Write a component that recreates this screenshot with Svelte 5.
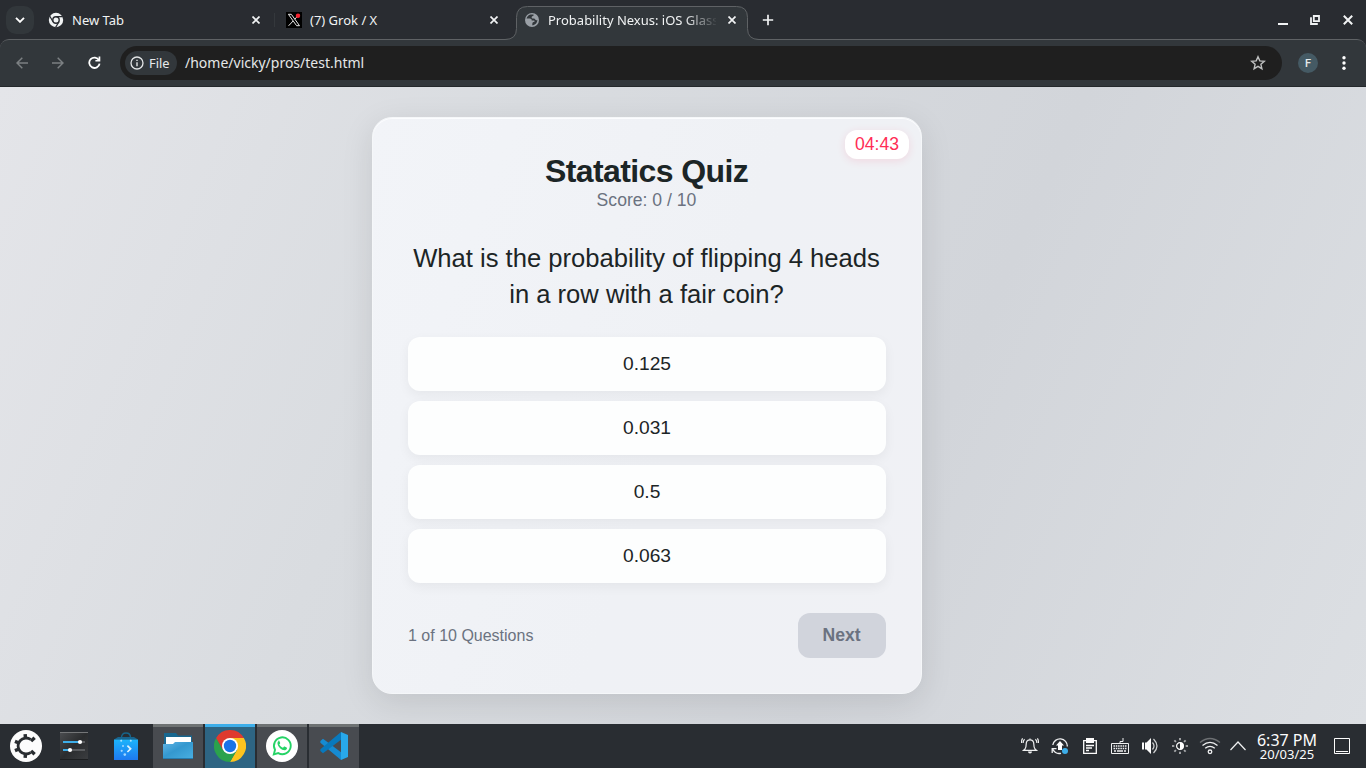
<script>
  const options = ['0.125', '0.031', '0.5', '0.063'];
</script>

{#snippet close()}
  <svg class="close" width="8" height="8" viewBox="0 0 8 8"><path d="M.5.5l7 7M7.5.5l-7 7" stroke="#f1f3f4" stroke-width="1.7" fill="none" /></svg>
{/snippet}

<div class="screen">
  <header class="tabs">
    <button class="search" aria-label="Search tabs">
      <svg width="10" height="6" viewBox="0 0 10 6"><path d="M1 .8l4 4 4-4" fill="none" stroke="#fff" stroke-width="1.9" /></svg>
    </button>
    <div class="tab first">
      <svg width="16" height="16" viewBox="0 0 16 16">
        <circle cx="8" cy="8" r="7.2" fill="#f1f3f4" />
        <circle cx="8" cy="8" r="3.2" fill="#f1f3f4" stroke="#292c31" stroke-width="1.4" />
        <path d="M8 4.6h6.7M5 9.7L1.7 4M11 9.7l-3.4 5.7" stroke="#292c31" stroke-width="1.2" />
      </svg>
      <span class="label">New Tab</span>
      {@render close()}
    </div>
    <div class="tab second">
      <svg width="16" height="16" viewBox="0 0 16 16">
        <rect width="16" height="16" fill="#000" />
        <path d="M2.4 2.3h2.9l8.2 11.4h-2.9zM13 2.5L8.8 7.2M7.1 9L2.6 13.8" fill="none" stroke="#e8e8e8" stroke-width="1" />
        <circle cx="12" cy="3.8" r="2.2" fill="#f4212e" />
      </svg>
      <span class="label">(7) Grok / X</span>
      {@render close()}
    </div>
    <div class="tab active">
      <svg class="shape" width="254" height="34" viewBox="0 0 254 34">
        <path d="M0 34v-.5Q11.5 33.5 11.5 22.5V11.5Q11.5.5 22.5.5h209q11 0 11 11v11q0 11 11.5 11v.5z" fill="#32373b" />
        <path d="M0 33.5Q11.5 33.5 11.5 22.5V11.5Q11.5.5 22.5.5h209q11 0 11 11v11q0 11 11.5 11" fill="none" stroke="#5f6265" />
      </svg>
      <svg class="globe" width="14" height="14" viewBox="0 0 14 14">
        <circle cx="7" cy="7" r="7" fill="#9aa0a6" />
        <path d="M5.5 1.5c-2 .6-3.5 2-4 4.1h3.2c1.5 0 2 .8 2 1.8h2c.7 0 1 .6.8 1.1-.3.8-1.3.7-1.8 1.1-.5.5-.2 1.5-.5 2.7 2.9-.1 5-2.3 5.2-5.3-.8.5-1.6.3-2.2-.4-.4-.6-.7-1-1.8-1-1.4 0-2-.7-1.7-1.6.3-.8.8-1.2 1.8-1.3V1.5z" fill="#32373b" />
      </svg>
      <span class="label">Probability Nexus: iOS Glass</span>
      {@render close()}
    </div>
    <svg class="plus" width="12" height="12" viewBox="0 0 12 12"><path d="M6 .8v10.4M.8 6h10.4" stroke="#f1f3f4" stroke-width="1.7" /></svg>
    <div class="controls">
      <svg width="10" height="10" viewBox="0 0 10 10"><path d="M0 9h10" stroke="#f1f3f4" stroke-width="2" /></svg>
      <svg width="10" height="10" viewBox="0 0 10 10"><path d="M3.8 1h5.2v5.2H3.8zM1 2.2V9h6.8" fill="none" stroke="#f1f3f4" stroke-width="1.8" /></svg>
      <svg width="10" height="10" viewBox="0 0 10 10"><path d="M.8.8l8.4 8.4M9.2.8L.8 9.2" stroke="#f1f3f4" stroke-width="2" /></svg>
    </div>
  </header>

  <div class="toolbar">
    <svg class="nav" width="12" height="12" viewBox="0 0 12 12"><path d="M12 6H1M6.3.7L1 6l5.3 5.3" fill="none" stroke="#7c8083" stroke-width="1.5" /></svg>
    <svg class="nav" width="12" height="12" viewBox="0 0 12 12"><path d="M0 6h11M5.7.7L11 6l-5.3 5.3" fill="none" stroke="#7c8083" stroke-width="1.5" /></svg>
    <svg class="nav" width="13" height="13" viewBox="0 0 13 13"><path d="M11 4.2A5.2 5.2 0 1 0 11.6 7.6" fill="none" stroke="#fff" stroke-width="1.8" /><path d="M12.3.6v5H7.4V4h3.2V.6z" fill="#fff" /></svg>
    <div class="address">
      <div class="chip">
        <svg width="14" height="14" viewBox="0 0 14 14"><circle cx="7" cy="7" r="6" fill="none" stroke="#e3e5e6" stroke-width="1.3" /><path d="M7 6.2v4M7 3.7v1.4" stroke="#e3e5e6" stroke-width="1.4" /></svg>
        <span>File</span>
      </div>
      <span class="url">/home/vicky/pros/test.html</span>
      <svg class="star" width="16" height="16" viewBox="0 0 16 16"><path d="M8 1.8l1.8 4.1 4.5.4-3.4 3 1 4.4L8 11.4l-3.9 2.3 1-4.4-3.4-3 4.5-.4z" fill="none" stroke="#bfc0c0" stroke-width="1.4" /></svg>
    </div>
    <div class="avatar">F</div>
    <svg class="dots" width="4" height="14" viewBox="0 0 4 14" fill="#fff"><circle cx="2" cy="1.8" r="1.7" /><circle cx="2" cy="7" r="1.7" /><circle cx="2" cy="12.2" r="1.7" /></svg>
  </div>

  <main>
    <section class="card">
      <div class="timer">04:43</div>
      <h1>Statatics Quiz</h1>
      <p class="score">Score: 0 / 10</p>
      <p class="question">What is the probability of flipping 4 heads in a row with a fair coin?</p>
      <div class="options">
        {#each options as option}
          <button class="option">{option}</button>
        {/each}
      </div>
      <footer>
        <span>1 of 10 Questions</span>
        <button class="next" disabled>Next</button>
      </footer>
    </section>
  </main>

  <div class="taskbar">
    <div class="launch">
      <svg width="32" height="32" viewBox="0 0 32 32">
        <circle cx="16" cy="16" r="16" fill="#fcfcfc" />
        <path d="M20.6 9.4A8 8 0 1 0 20.6 22.6" fill="none" stroke="#292d31" stroke-width="2.8" />
        <g stroke="#292d31" stroke-width="3.4">
          {#each [-44, -94, -157, 157, 94, 44] as a}
            <path d="M23 16h5" transform="rotate({a} 16 16)" />
          {/each}
        </g>
      </svg>
    </div>
    <div class="launch settings">
      <svg width="28" height="28" viewBox="0 0 28 28">
        <defs><linearGradient id="dark" x1="0" y1="0" x2="1" y2="1"><stop stop-color="#4b4d50" /><stop offset=".5" stop-color="#2a2c2e" /><stop offset="1" stop-color="#3b3d40" /></linearGradient></defs>
        <rect width="28" height="28" fill="url(#dark)" /><path d="M0 .5h28" stroke="#747678" /><path d="M0 27.5h28" stroke="#1c1e20" />
        <path d="M20 10h5M10 18h15" stroke="#5a5c5f" stroke-width="2" /><path d="M3 10h17M3 18h7" stroke="#3daee9" stroke-width="2" />
        <circle cx="20" cy="10" r="2.1" fill="#fff" /><circle cx="10" cy="18" r="2.1" fill="#fff" />
      </svg>
    </div>
    <div class="launch store">
      <svg width="24" height="28" viewBox="0 0 24 28">
        <defs><linearGradient id="bag" x2="0" y2="1"><stop stop-color="#1cb4fb" /><stop offset="1" stop-color="#1e79f1" /></linearGradient></defs>
        <path d="M7.5 9V5.5Q7.5 1 12 1t4.5 4.5V9" fill="none" stroke="#17658b" stroke-width="1.4" />
        <path d="M0 7.5L4 5h16l4 2.5z" fill="#18658f" /><path d="M0 7.5h24V28H0z" fill="url(#bag)" />
        <circle cx="7.2" cy="8.8" r="1" fill="#a8e2ff" /><circle cx="16.8" cy="8.8" r="1" fill="#a8e2ff" />
        <path d="M13.4 13.7l3.2 3.1-3.2 3.2" fill="none" stroke="#ddf3ff" stroke-width="1.7" />
        <g fill="#a2d6ff"><circle cx="9" cy="14" r="1" /><circle cx="7.7" cy="18.8" r="1.1" /><circle cx="10.8" cy="22.6" r="1.3" /></g>
      </svg>
    </div>
    <div class="tasks">
      <div class="task">
        <svg width="30" height="28" viewBox="0 0 30 28">
          <defs><linearGradient id="folder" x2="1" y2="1"><stop stop-color="#62b5e5" /><stop offset=".45" stop-color="#3498cf" /><stop offset="1" stop-color="#49afe1" /></linearGradient></defs>
          <path d="M1 1h12l2 2.5h14V18H1z" fill="#18678f" /><path d="M3 5h25v10H3z" fill="#fff" /><path d="M0 12h10l2-2h18v17H0z" fill="url(#folder)" /><path d="M0 26.5h30" stroke="#267caf" />
        </svg>
      </div>
      <div class="task focused">
        <svg width="32" height="32" viewBox="0 0 32 32">
          <path d="M2.14 8A16 16 0 0 1 29.86 8H16z" fill="#df3a2f" />
          <path d="M29.86 8A16 16 0 0 1 16 32l6.93-12L16 8z" fill="#fcc31f" />
          <path d="M2.14 8A16 16 0 0 0 16 32l6.93-12H9.07z" fill="#2ba24c" />
          <path d="M2.14 8L9.07 20 16 8z" fill="#df3a2f" />
          <circle cx="16" cy="16" r="8" fill="#fff" /><circle cx="16" cy="16" r="6.2" fill="#1a73e8" />
        </svg>
      </div>
      <div class="task">
        <svg width="32" height="32" viewBox="0 0 32 32">
          <circle cx="16" cy="16" r="16" fill="#fff" />
          <path d="M7.8 24.4l1.2-4.6a8.4 8.4 0 1 1 3.3 3.3z" fill="none" stroke="#25d366" stroke-width="1.9" />
          <path d="M12.5 11.2c-.6.3-1.1 1.1-1 2.2.3 3.4 4.1 6.7 7 6.8 1.1 0 2.1-.7 2.4-1.5.2-.7.1-1-.3-1.2l-2-.9c-.4-.2-.6 0-.8.2l-.8 1c-1.4-.4-3.1-1.9-3.7-3.3l.8-1.1c.2-.3 0-.6-.1-.8l-.7-1.7c-.2-.5-.5-.5-.8-.4z" fill="#25d366" />
        </svg>
      </div>
      <div class="task">
        <svg width="28" height="28" viewBox="0 0 28 28">
          <path d="M21 0l7 3v22l-7 3z" fill="#28a8ea" />
          <path d="M3 6.8L21 20.3V28L.4 10.8V9z" fill="#168bd2" />
          <path d="M21 0v7.7L3 21.2.4 19v-1.8z" fill="#0879bd" />
        </svg>
      </div>
    </div>
    <div class="tray">
      <div><svg width="18" height="18" viewBox="0 0 18 18" fill="none" stroke="#eff0f1" stroke-width="1.2"><path d="M9 1.5v1.2M4 12c1-1.5 1.2-3 1.2-5 0-2.7 1.5-4.2 3.8-4.2s3.8 1.5 3.8 4.2c0 2 .2 3.5 1.2 5l1.5 1.3H2.5zM3.6 2.2Q2.2 3.4 2.1 6M1.6 1.4Q.4 3 .5 6M14.4 2.2q1.4 1.2 1.5 3.8M16.4 1.4Q17.6 3 17.5 6" /><path d="M7 14.5h4a2 2 0 0 1-4 0z" fill="#eff0f1" stroke="none" /></svg></div>
      <div><svg width="18" height="18" viewBox="0 0 18 18" fill="none" stroke="#eff0f1" stroke-width="1.3"><path d="M1.8 8A7.3 7.3 0 0 1 16.3 9.5M2 12.5A7.3 7.3 0 0 0 10 16.3M1.2 16v-4.3h4.3" /><path d="M9 4l4 4.5h-2V13H7V8.5H5z" fill="#fff" stroke="none" /><circle cx="14" cy="14" r="3" fill="#3daee9" stroke="none" /></svg></div>
      <div><svg width="14" height="16" viewBox="0 0 14 16" fill="none" stroke="#fcfcfc" stroke-width="1.3"><path d="M.7 2.7h12.6v12.6H.7zM3 7.5h8M3 10h6M3 12.5h3" /><path d="M3 0h8v5H3z" fill="#fcfcfc" stroke="none" /></svg></div>
      <div><svg width="18" height="16" viewBox="0 0 18 16" fill="none" stroke="#eff0f1"><path d="M.5 5.5h17v10H.5zM9 5.5V3.5h3V0" /><path d="M2.5 8h13M2.5 10.5h13" stroke-width="1.4" stroke-dasharray="1.5 .8" /><path d="M3 13h2M6 13h6M13 13h2" stroke-width="1.4" /></svg></div>
      <div><svg width="18" height="18" viewBox="0 0 18 18"><path d="M1 5.5h2v7H1zM4 5.5h1.5L10 1v16l-4.500-4.500H4z" fill="#fcfcfc" /><path d="M11.5 5.5q3 3.5 0 7M12.5 2q7 7 0 14" stroke="#d1d3d4" fill="none" stroke-width="1.2" /></svg></div>
      <div><svg width="16" height="16" viewBox="0 0 16 16"><g stroke="#a9abad" stroke-width="1.8">{#each [0, 45, 90, 135, 180, 225, 270, 315] as a}<path d="M8 0v2.3" transform="rotate({a} 8 8)" />{/each}</g><circle cx="8" cy="8" r="3.4" fill="none" stroke="#fff" stroke-width="1.2" /><path d="M8 4.5a3.5 3.5 0 0 1 0 7z" fill="#fff" /></svg></div>
      <div><svg width="22" height="18" viewBox="0 0 22 18" fill="none" stroke="#eff0f1" stroke-width="1.3"><path d="M1 5.5Q11-2.5 21 5.5" stroke="#6d7073" /><path d="M3.5 8.5Q11 2.2 18.5 8.5M6.2 11.3q4.8-4 9.6 0" /><circle cx="11" cy="14.8" r="1.8" /></svg></div>
      <div><svg width="16" height="10" viewBox="0 0 16 10" fill="none" stroke="#eff0f1" stroke-width="1.2"><path d="M.5 9L8 1l7.5 8" /></svg></div>
    </div>
    <div class="clock"><span>6:37 PM</span><small>20/03/25</small></div>
    <svg class="desktop" width="16" height="16" viewBox="0 0 16 16" fill="none" stroke="#fcfcfc"><path d="M.5.5h15v15H.5zM2 13.5h12" /></svg>
  </div>
</div>

<style>
  :global(body) { margin: 0; overflow: hidden; }
  * { box-sizing: border-box; }
  svg { display: block; flex: none; }
  button { border: 0; padding: 0; font-family: inherit; }
  .screen { width: 1366px; height: 768px; display: flex; flex-direction: column; font-family: "Noto Sans", sans-serif; background: #292c31; }

  .tabs { position: relative; z-index: 1; height: 39px; flex: none; display: flex; align-items: flex-start; padding-left: 6px; color: #f1f3f4; font-size: 13px; }
  .search { width: 28px; height: 28px; margin-top: 6px; border-radius: 10px; background: #32373b; display: flex; align-items: center; justify-content: center; }
  .tab { height: 28px; margin-top: 6px; display: flex; align-items: center; white-space: nowrap; }
  .label { flex: 1; overflow: hidden; line-height: 20px; }
  .first { width: 241px; padding: 0 14px; gap: 8px; border-right: 1px solid #34383c; height: 14px; margin-top: 13px; }
  .second { width: 241px; padding: 0 18px 0 11px; gap: 8px; }
  .active { position: relative; width: 232px; padding: 0 12px 0 9px; gap: 9px; }
  .shape { position: absolute; left: -11px; top: 0; }
  .active > :not(.shape) { position: relative; }
  .active .label { flex: none; width: 168px; margin-right: 3px; mask-image: linear-gradient(90deg, #000 136px, transparent 170px); }
  .plus { margin: 14px 0 0 14px; }
  .controls { display: flex; gap: 22px; margin: 15px 13px 0 auto; }
  .controls svg:last-child { margin-left: 1px; }

  .toolbar { height: 48px; flex: none; display: flex; align-items: center; padding: 0 20px 1px 16px; background: #32373b; border-top: 1px solid #5f6265; border-bottom: 1px solid #24282b; border-radius: 9px 9px 0 0; }
  .nav { margin-right: 24px; }
  .nav:nth-child(3) { margin-right: 19px; }
  .address { width: 1162px; height: 34px; border-radius: 17px; background: #1f1f1f; display: flex; align-items: center; padding: 0 16px 0 5px; }
  .chip { width: 52px; height: 24px; border-radius: 12px; background: #32373b; display: flex; align-items: center; gap: 5px; padding-left: 5px; color: #e8eaeb; font-size: 12.8px; }
  .url { margin-left: 8px; color: #e5e7e8; font-size: 14px; }
  .star { margin-left: auto; }
  .avatar { width: 20px; height: 20px; border-radius: 50%; background: #455a64; margin: 0 auto 0 16px; color: #e5eaec; font: 500 11px/21px Roboto, sans-serif; text-align: center; }

  main { height: 637px; flex: none; display: flex; justify-content: center; padding: 30px 72px 0 0; background: linear-gradient(114deg, #e4e5e9 0%, #d9dce0 32%, #d2d5da 66%, #dcdfe3 100%); font-family: "Liberation Sans", sans-serif; color: #1c2526; overflow: hidden; }
  .card { position: relative; width: 550px; height: 577px; padding: 35px; border: 1px solid #f5f7f9; border-radius: 20px; background: linear-gradient(110deg, #f2f4f8, #eff1f5 55%, #f0f1f5); box-shadow: 0 8px 32px rgba(0, 0, 0, .1), inset 0 1px #fcfdff; }
  .timer { position: absolute; right: 12px; top: 12px; height: 29px; padding: 0 10px; border-radius: 12px; background: #fff; box-shadow: 0 2px 8px rgba(255, 45, 85, .12); color: #ff2d55; font-size: 17.6px; line-height: 28px; }
  h1 { margin: 0; padding-right: 1px; font-size: 32px; line-height: 36px; letter-spacing: -.6px; text-align: center; }
  p { margin: 0; text-align: center; }
  .score { margin-top: 1px; padding-right: 1px; color: #6b7280; font-size: 17.6px; line-height: 20px; }
  .question { margin: 30px -.5px 25px; padding-right: 1px; font-size: 25.6px; line-height: 36px; }
  .options { display: grid; gap: 10px; }
  .option { height: 54px; border-radius: 12px; background: #fdfefe; color: #1c2526; font-size: 19.2px; box-shadow: 0 4px 12px rgba(0, 0, 0, .05); }
  footer { display: flex; justify-content: space-between; align-items: center; margin-top: 30px; color: #6b7280; font-size: 16px; }
  .next { width: 88px; height: 45px; padding-right: 1px; border-radius: 12px; background: #d1d4dc; color: #6b7280; font-size: 17.6px; font-weight: 700; }

  .taskbar { height: 44px; margin-top: auto; flex: none; display: flex; align-items: center; background: #292d32; color: #fcfcfc; }
  .launch { margin-left: 10px; }
  .settings { margin-left: 18px; }
  .store { margin-left: 26px; }
  .tasks { display: flex; gap: 2px; margin-left: 15px; }
  .task { width: 50px; height: 44px; border-top: 3px solid #6e7273; padding-bottom: 3px; background: #484b50; display: flex; align-items: center; justify-content: center; }
  .focused { background: #2e6583; border-top-color: #3daee9; }
  .tray { margin-left: auto; display: flex; align-items: center; }
  .tray div { width: 30px; display: flex; justify-content: center; }
  .tray div:last-child { width: 26px; }
  .clock { width: 60px; margin: 0 17px 0 6px; display: flex; flex-direction: column; align-items: center; font-size: 16px; line-height: 17px; white-space: nowrap; }
  .clock small { font-size: 13px; line-height: 11px; }
  .desktop { margin-right: 16px; }
</style>
